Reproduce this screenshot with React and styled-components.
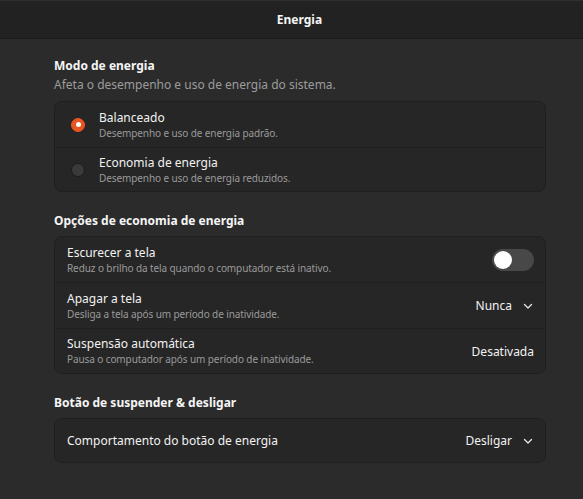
import React from "react";
import styled, { createGlobalStyle } from "styled-components";

const Global = createGlobalStyle`
  html, body { margin: 0; padding: 0; background: #2b2b2b; }
  body { font-family: "Noto Sans", "DejaVu Sans", sans-serif; color: #f2f2f2; }
  * { box-sizing: border-box; }
`;

const Window = styled.div`
  width: 583px;
  height: 499px;
  background: #2b2b2b;
  display: flex;
  flex-direction: column;
  overflow: hidden;
`;

const HeaderBar = styled.header`
  height: 39px;
  flex: none;
  background: #222222;
  border-top: 1px solid #2f2f2f;
  border-bottom: 1px solid #1b1b1b;
  display: flex;
  align-items: center;
  justify-content: center;
  font-weight: 700;
  font-size: 12px;
  color: #f5f5f5;
  padding-left: 16px;
`;

const Content = styled.main`
  padding: 19px 37px 0 54px;
  display: flex;
  flex-direction: column;
`;

const Group = styled.section`
  display: flex;
  flex-direction: column;
  margin-bottom: 21px;
`;

const GroupTitle = styled.h2`
  margin: 0;
  font-size: 12px;
  font-weight: 700;
  line-height: 16px;
  color: #f5f5f5;
`;

const GroupDesc = styled.p`
  margin: 3px 0 0;
  font-size: 12px;
  line-height: 16px;
  color: #9c9c9c;
`;

const Card = styled.div`
  margin-top: ${(p) => p.$top || 7}px;
  background: #262626;
  border: 1px solid #1f1f1f;
  border-radius: 8px;
  display: flex;
  flex-direction: column;
  overflow: hidden;
`;

const Row = styled.div`
  height: ${(p) => p.$h || 45}px;
  display: flex;
  align-items: center;
  padding: 0 11px 0 ${(p) => p.$pl || 12}px;
  gap: 12px;
  & + & { border-top: 1px solid #1f1f1f; }
`;

const Texts = styled.div`
  flex: 1;
  display: flex;
  flex-direction: column;
  min-width: 0;
`;

const RowTitle = styled.div`
  font-size: 12px;
  line-height: 16px;
  color: #f2f2f2;
`;

const RowSub = styled.div`
  font-size: 10px;
  line-height: 14px;
  letter-spacing: -0.1px;
  color: #9a9a9a;
`;

const Radio = styled.span`
  width: 14px;
  height: 14px;
  border-radius: 50%;
  flex: none;
  margin-right: 2px;
  background: ${(p) => (p.$on ? "#e95420" : "#3a3a3a")};
  border: 1px solid ${(p) => (p.$on ? "#e95420" : "#1c1c1c")};
  display: flex;
  align-items: center;
  justify-content: center;
  &::after {
    content: "";
    display: ${(p) => (p.$on ? "block" : "none")};
    width: 5px;
    height: 5px;
    border-radius: 50%;
    background: #fff;
  }
`;

const Switch = styled.span`
  width: 42px;
  height: 22px;
  border-radius: 11px;
  background: #484848;
  flex: none;
  padding: 2px;
  display: flex;
  &::after {
    content: "";
    width: 18px;
    height: 18px;
    border-radius: 50%;
    background: #ffffff;
  }
`;

const Value = styled.span`
  font-size: 12px;
  color: #f2f2f2;
  display: flex;
  align-items: center;
  gap: 10px;
`;

const Chevron = () => (
  <svg width="12" height="12" viewBox="0 0 12 12" fill="none">
    <path d="M2.5 4.5 L6 8 L9.5 4.5" stroke="#e8e8e8" strokeWidth="1.3" strokeLinecap="round" strokeLinejoin="round" />
  </svg>
);

export default function App() {
  return (
    <Window>
      <Global />
      <HeaderBar>Energia</HeaderBar>
      <Content>
        <Group>
          <GroupTitle>Modo de energia</GroupTitle>
          <GroupDesc>Afeta o desempenho e uso de energia do sistema.</GroupDesc>
          <Card $top={8}>
            <Row $pl={16} $h={45}>
              <Radio $on />
              <Texts>
                <RowTitle>Balanceado</RowTitle>
                <RowSub>Desempenho e uso de energia padrão.</RowSub>
              </Texts>
            </Row>
            <Row $pl={16} $h={44}>
              <Radio />
              <Texts>
                <RowTitle>Economia de energia</RowTitle>
                <RowSub>Desempenho e uso de energia reduzidos.</RowSub>
              </Texts>
            </Row>
          </Card>
        </Group>
        <Group>
          <GroupTitle>Opções de economia de energia</GroupTitle>
          <Card>
            <Row $h={45}>
              <Texts>
                <RowTitle>Escurecer a tela</RowTitle>
                <RowSub>Reduz o brilho da tela quando o computador está inativo.</RowSub>
              </Texts>
              <Switch />
            </Row>
            <Row $h={46}>
              <Texts>
                <RowTitle>Apagar a tela</RowTitle>
                <RowSub>Desliga a tela após um período de inatividade.</RowSub>
              </Texts>
              <Value>Nunca<Chevron /></Value>
            </Row>
            <Row $h={45}>
              <Texts>
                <RowTitle>Suspensão automática</RowTitle>
                <RowSub>Pausa o computador após um período de inatividade.</RowSub>
              </Texts>
              <Value>Desativada</Value>
            </Row>
          </Card>
        </Group>
        <Group>
          <GroupTitle>Botão de suspender &amp; desligar</GroupTitle>
          <Card>
            <Row $h={43}>
              <Texts>
                <RowTitle>Comportamento do botão de energia</RowTitle>
              </Texts>
              <Value>Desligar<Chevron /></Value>
            </Row>
          </Card>
        </Group>
      </Content>
    </Window>
  );
}
